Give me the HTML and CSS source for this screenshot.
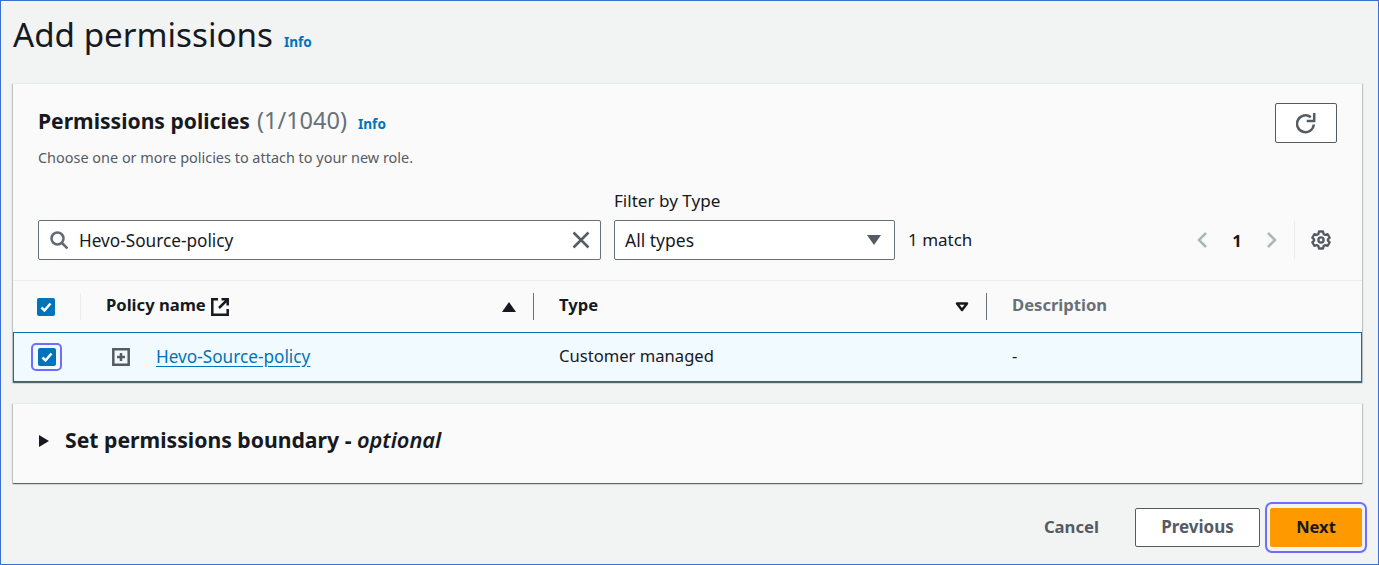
FILE: index.html
```html
<!DOCTYPE html>
<html lang="en">
<head>
    <meta charset="UTF-8">
    <title>Add permissions</title>
    <link rel="stylesheet" href="styles.css">
</head>
<body>
    <div class="page">
        <div class="page-header">
            <h1>Add permissions</h1>
            <a class="info info-top" href="#">Info</a>
        </div>

        <div class="card policies">
            <div class="card-header">
                <div class="card-title">
                    <div class="title-row">
                        <h2>Permissions policies</h2>
                        <span class="count">(1/1040)</span>
                        <a class="info" href="#">Info</a>
                    </div>
                    <p class="description">Choose one or more policies to attach to your new role.</p>
                </div>
                <button class="refresh" aria-label="Refresh">
                    <svg width="20" height="21" viewBox="0 0 20 21" fill="none" stroke="#545b64" stroke-width="2.5">
                        <path d="M17.800 11.500A8.400 8.400 0 1 1 14.800 4.300"/>
                        <path d="M18.200 0v8.100h-7.500"/>
                    </svg>
                </button>
            </div>

            <div class="filters">
                <div class="search">
                    <svg class="search-icon" width="18" height="18" viewBox="0 0 18 18" fill="none" stroke="#5f6b7a" stroke-width="2.5">
                        <circle cx="7.500" cy="7.500" r="6"/>
                        <path d="M12 12l5.500 5.500"/>
                    </svg>
                    <span class="search-text">Hevo-Source-policy</span>
                    <svg class="clear-icon" width="18" height="18" viewBox="0 0 18 18" fill="none" stroke="#545b64" stroke-width="2.500">
                        <path d="M1.500 1.500l15 15M16.500 1.500l-15 15"/>
                    </svg>
                </div>
                <div class="type-filter">
                    <label class="filter-label">Filter by Type</label>
                    <div class="select">
                        <span>All types</span>
                        <span class="select-caret"></span>
                    </div>
                </div>
                <span class="matches">1 match</span>
                <div class="pager">
                    <svg width="12" height="18" viewBox="0 0 12 18" fill="none" stroke="#aab7b8" stroke-width="2.500"><path d="M10 2L3 9l7 7"/></svg>
                    <span class="page-num">1</span>
                    <svg width="12" height="18" viewBox="0 0 12 18" fill="none" stroke="#aab7b8" stroke-width="2.500"><path d="M2 2l7 7-7 7"/></svg>
                    <span class="pager-sep"></span>
                    <svg width="20" height="20" viewBox="0 0 20 20" fill="none" stroke="#545b64" stroke-width="2.300">
                        <circle cx="10" cy="10" r="2.600"/>
                        <path d="M8 1.500h4l.6 2.400 1.700 1 2.400-.7 2 3.500-1.800 1.700v1.200l1.800 1.700-2 3.500-2.400-.7-1.700 1-.6 2.400H8l-.6-2.400-1.700-1-2.400.7-2-3.500 1.800-1.700V9.400L1.300 7.700l2-3.500 2.400.7 1.700-1z" stroke-linejoin="round"/>
                    </svg>
                </div>
            </div>

            <div class="table-head">
                <div class="col col-check">
                    <span class="checkbox"><svg width="14" height="14" viewBox="0 0 14 14" fill="none" stroke="#fff" stroke-width="2.500"><path d="M2.500 7.500l3 3 6-7"/></svg></span>
                </div>
                <div class="col col-name">
                    <span class="th-label">Policy name</span>
                    <svg class="ext-icon" width="18" height="18" viewBox="0 0 18 18" fill="none" stroke="#16191f" stroke-width="2.500">
                        <path d="M7 1.300H1.300v15.400h15.400V11"/>
                        <path d="M10.500 1.300h6.200v6.200M16.700 1.300L8 10"/>
                    </svg>
                    <span class="sort-up"></span>
                </div>
                <div class="col col-type">
                    <span class="th-label">Type</span>
                    <svg class="sort-down" width="14" height="10" viewBox="0 0 14 10" fill="none" stroke="#16191f" stroke-width="2.500"><path d="M2 1.500h10L7 8z" stroke-linejoin="round"/></svg>
                </div>
                <div class="col col-desc"><span class="th-label muted">Description</span></div>
            </div>

            <div class="table-row">
                <div class="col col-check">
                    <span class="focus-ring"><span class="checkbox"><svg width="14" height="14" viewBox="0 0 14 14" fill="none" stroke="#fff" stroke-width="2.500"><path d="M2.500 7.500l3 3 6-7"/></svg></span></span>
                </div>
                <div class="col col-name">
                    <svg class="expand-icon" width="18" height="18" viewBox="0 0 18 18" fill="none" stroke="#545b64" stroke-width="2.500">
                        <path d="M1.300 1.300h15.400v15.400H1.300z"/>
                        <path d="M5 9h8M9 5v8"/>
                    </svg>
                    <a class="policy-link" href="#">Hevo-Source-policy</a>
                </div>
                <div class="col col-type"><span class="td-text">Customer managed</span></div>
                <div class="col col-desc"><span class="td-text">-</span></div>
            </div>
        </div>

        <div class="card boundary">
            <span class="expand-caret"></span>
            <h2>Set permissions boundary - <em>optional</em></h2>
        </div>

        <div class="actions">
            <button class="btn-link">Cancel</button>
            <button class="btn-normal">Previous</button>
            <span class="next-ring"><button class="btn-primary">Next</button></span>
        </div>
    </div>
</body>
</html>
```
FILE: styles.css
```css
* {
    box-sizing: border-box;
}
html, body {
    margin: 0;
    height: 100%;
}
body {
    font-family: "Noto Sans", Arial, sans-serif;
    font-size: 16.6px;
    color: #16191f;
    background-color: #f2f3f3;
}
h1, h2, p {
    margin: 0;
}
button {
    font-family: inherit;
    cursor: pointer;
}
a {
    color: #0073bb;
}
.page {
    height: 565px;
    border: 1px solid #3b6fd1;
    padding: 0 16px 0 12px;
}
.page-header {
    height: 82px;
    display: flex;
    align-items: flex-start;
    padding-top: 11px;
}
h1 {
    font-size: 33.2px;
    font-weight: 400;
    line-height: 46px;
}
.info {
    font-size: 13.6px;
    font-weight: 700;
    text-decoration: none;
}
.info-top {
    margin: 20px 0 0 11px;
}
.card {
    background-color: #fafafa;
    border-top: 1px solid #eaeded;
    box-shadow: 0 1px 1px 0 rgba(0, 28, 36, 0.5), 1px 1px 1px 0 rgba(0, 28, 36, 0.15), -1px 1px 1px 0 rgba(0, 28, 36, 0.15);
}
.policies {
    height: 299px;
}
.card-header {
    display: flex;
    justify-content: space-between;
    padding: 19px 25px 0;
    height: 94px;
}
.title-row {
    display: flex;
    align-items: baseline;
    height: 36px;
}
.title-row h2 {
    font-size: 21.1px;
    line-height: 36px;
    font-weight: 700;
}
.count {
    font-size: 23.5px;
    color: #687078;
    margin-left: 7px;
}
.title-row .info {
    margin-left: 11px;
}
.description {
    font-size: 14.45px;
    line-height: 20px;
    color: #545b64;
    margin-top: 9px;
}
.refresh {
    width: 62px;
    height: 40px;
    background-color: #fff;
    border: 1px solid #545b64;
    border-radius: 2px;
    display: flex;
    align-items: center;
    justify-content: center;
    padding: 0;
}
.filters {
    display: flex;
    align-items: flex-end;
    height: 82px;
    padding: 0 31px 0 25px;
    gap: 13px;
}
.search {
    width: 563px;
    height: 40px;
    background-color: #fff;
    border: 1px solid #687078;
    border-radius: 2px;
    display: flex;
    align-items: center;
    padding: 0 10px 0 11px;
}
.search-text {
    margin-left: 11px;
    flex: 1;
    font-size: 17.2px;
}
.type-filter {
    width: 281px;
}
.filter-label {
    display: block;
    font-size: 17.1px;
    line-height: 22px;
    margin-bottom: 8px;
}
.select {
    height: 40px;
    background-color: #fff;
    border: 1px solid #687078;
    border-radius: 2px;
    display: flex;
    align-items: center;
    justify-content: space-between;
    padding: 0 13px 0 10px;
    font-size: 17.5px;
}
.select-caret {
    width: 0;
    height: 0;
    border-left: 7px solid transparent;
    border-right: 7px solid transparent;
    border-top: 10px solid #545b64;
}
.matches {
    height: 40px;
    line-height: 40px;
    font-size: 17px;
}
.pager {
    margin-left: auto;
    height: 40px;
    display: flex;
    align-items: center;
}
.page-num {
    width: 58px;
    text-align: center;
    font-weight: 700;
}
.pager-sep {
    width: 1px;
    height: 38px;
    background-color: #eaeded;
    margin: 0 16px;
}
.table-head, .table-row {
    display: grid;
    align-items: center;
}
.table-head {
    grid-template-columns: 68px 453px 453px 1fr;
    height: 52px;
    margin-top: 20px;
    border-top: 1px solid #eaeded;
    font-weight: 700;
}
.table-row {
    grid-template-columns: 67px 453px 453px 1fr;
    height: 50px;
    background-color: #f1faff;
    border: 1px solid #0073bb;
}
.col {
    display: flex;
    align-items: center;
}
.col-check {
    justify-content: center;
}
.table-head .col-check, .table-head .col-name, .table-head .col-type {
    height: 27px;
    border-right: 1px solid #687078;
}
.table-head .col-check {
    border-right-color: #eaeded;
    padding-right: 1px;
}
.table-head .col-name {
    padding: 0 17px 0 25px;
}
.table-head .col-type {
    padding: 0 17px 0 25px;
}
.table-head .col-desc {
    padding-left: 25px;
}
.th-label {
    margin-bottom: 4px;
}
.muted {
    color: #687078;
}
.ext-icon {
    margin-left: 5px;
}
.sort-up {
    margin-left: auto;
    width: 0;
    height: 0;
    border-left: 7px solid transparent;
    border-right: 7px solid transparent;
    border-bottom: 10px solid #16191f;
}
.sort-down {
    margin-left: auto;
}
.checkbox {
    width: 18px;
    height: 18px;
    border-radius: 2px;
    background-color: #0073bb;
    display: flex;
    align-items: center;
    justify-content: center;
}
.focus-ring {
    width: 31px;
    height: 28px;
    border: 2px solid #6f6cff;
    border-radius: 5px;
    display: flex;
    align-items: center;
    justify-content: center;
}
.table-row .col-check {
    padding-right: 2px;
}
.table-row .col-name {
    padding-left: 31px;
}
.table-row .col-type, .table-row .col-desc {
    padding-left: 25px;
}
.td-text {
    margin-bottom: 3px;
}
.policy-link {
    margin: 0 0 2px 26px;
    font-size: 17.2px;
    text-underline-offset: 3px;
}
.boundary {
    height: 80px;
    margin-top: 21px;
    display: flex;
    align-items: center;
    padding: 0 25px 5px 26px;
}
.boundary h2 {
    font-size: 21.2px;
    font-weight: 700;
    margin-bottom: 4px;
}
.boundary em {
    font-weight: 600;
    font-size: 21.8px;
}
.expand-caret {
    width: 0;
    height: 0;
    border-top: 6px solid transparent;
    border-bottom: 6px solid transparent;
    border-left: 10px solid #16191f;
    margin-right: 16px;
}
.actions {
    display: flex;
    justify-content: flex-end;
    align-items: center;
    margin: 19px -5px 0 0;
    height: 51px;
}
.btn-link {
    border: 0;
    background: none;
    color: #545b64;
    font-size: 16.7px;
    font-weight: 700;
    margin-right: 16px;
    padding: 0 20px 2px;
}
.btn-normal {
    width: 125px;
    height: 39px;
    background-color: #fff;
    border: 1px solid #545b64;
    border-radius: 2px;
    color: #545b64;
    font-size: 17px;
    font-weight: 700;
    padding: 0 0 2px;
}
.next-ring {
    margin-left: 5px;
    border: 2px solid #6f6cff;
    border-radius: 7px;
    padding: 4px 3px;
    display: flex;
}
.btn-primary {
    width: 92px;
    height: 39px;
    background-color: #ff9900;
    border: 0;
    border-radius: 2px;
    color: #16191f;
    font-size: 16.5px;
    font-weight: 700;
    padding: 0 0 2px;
}
```
